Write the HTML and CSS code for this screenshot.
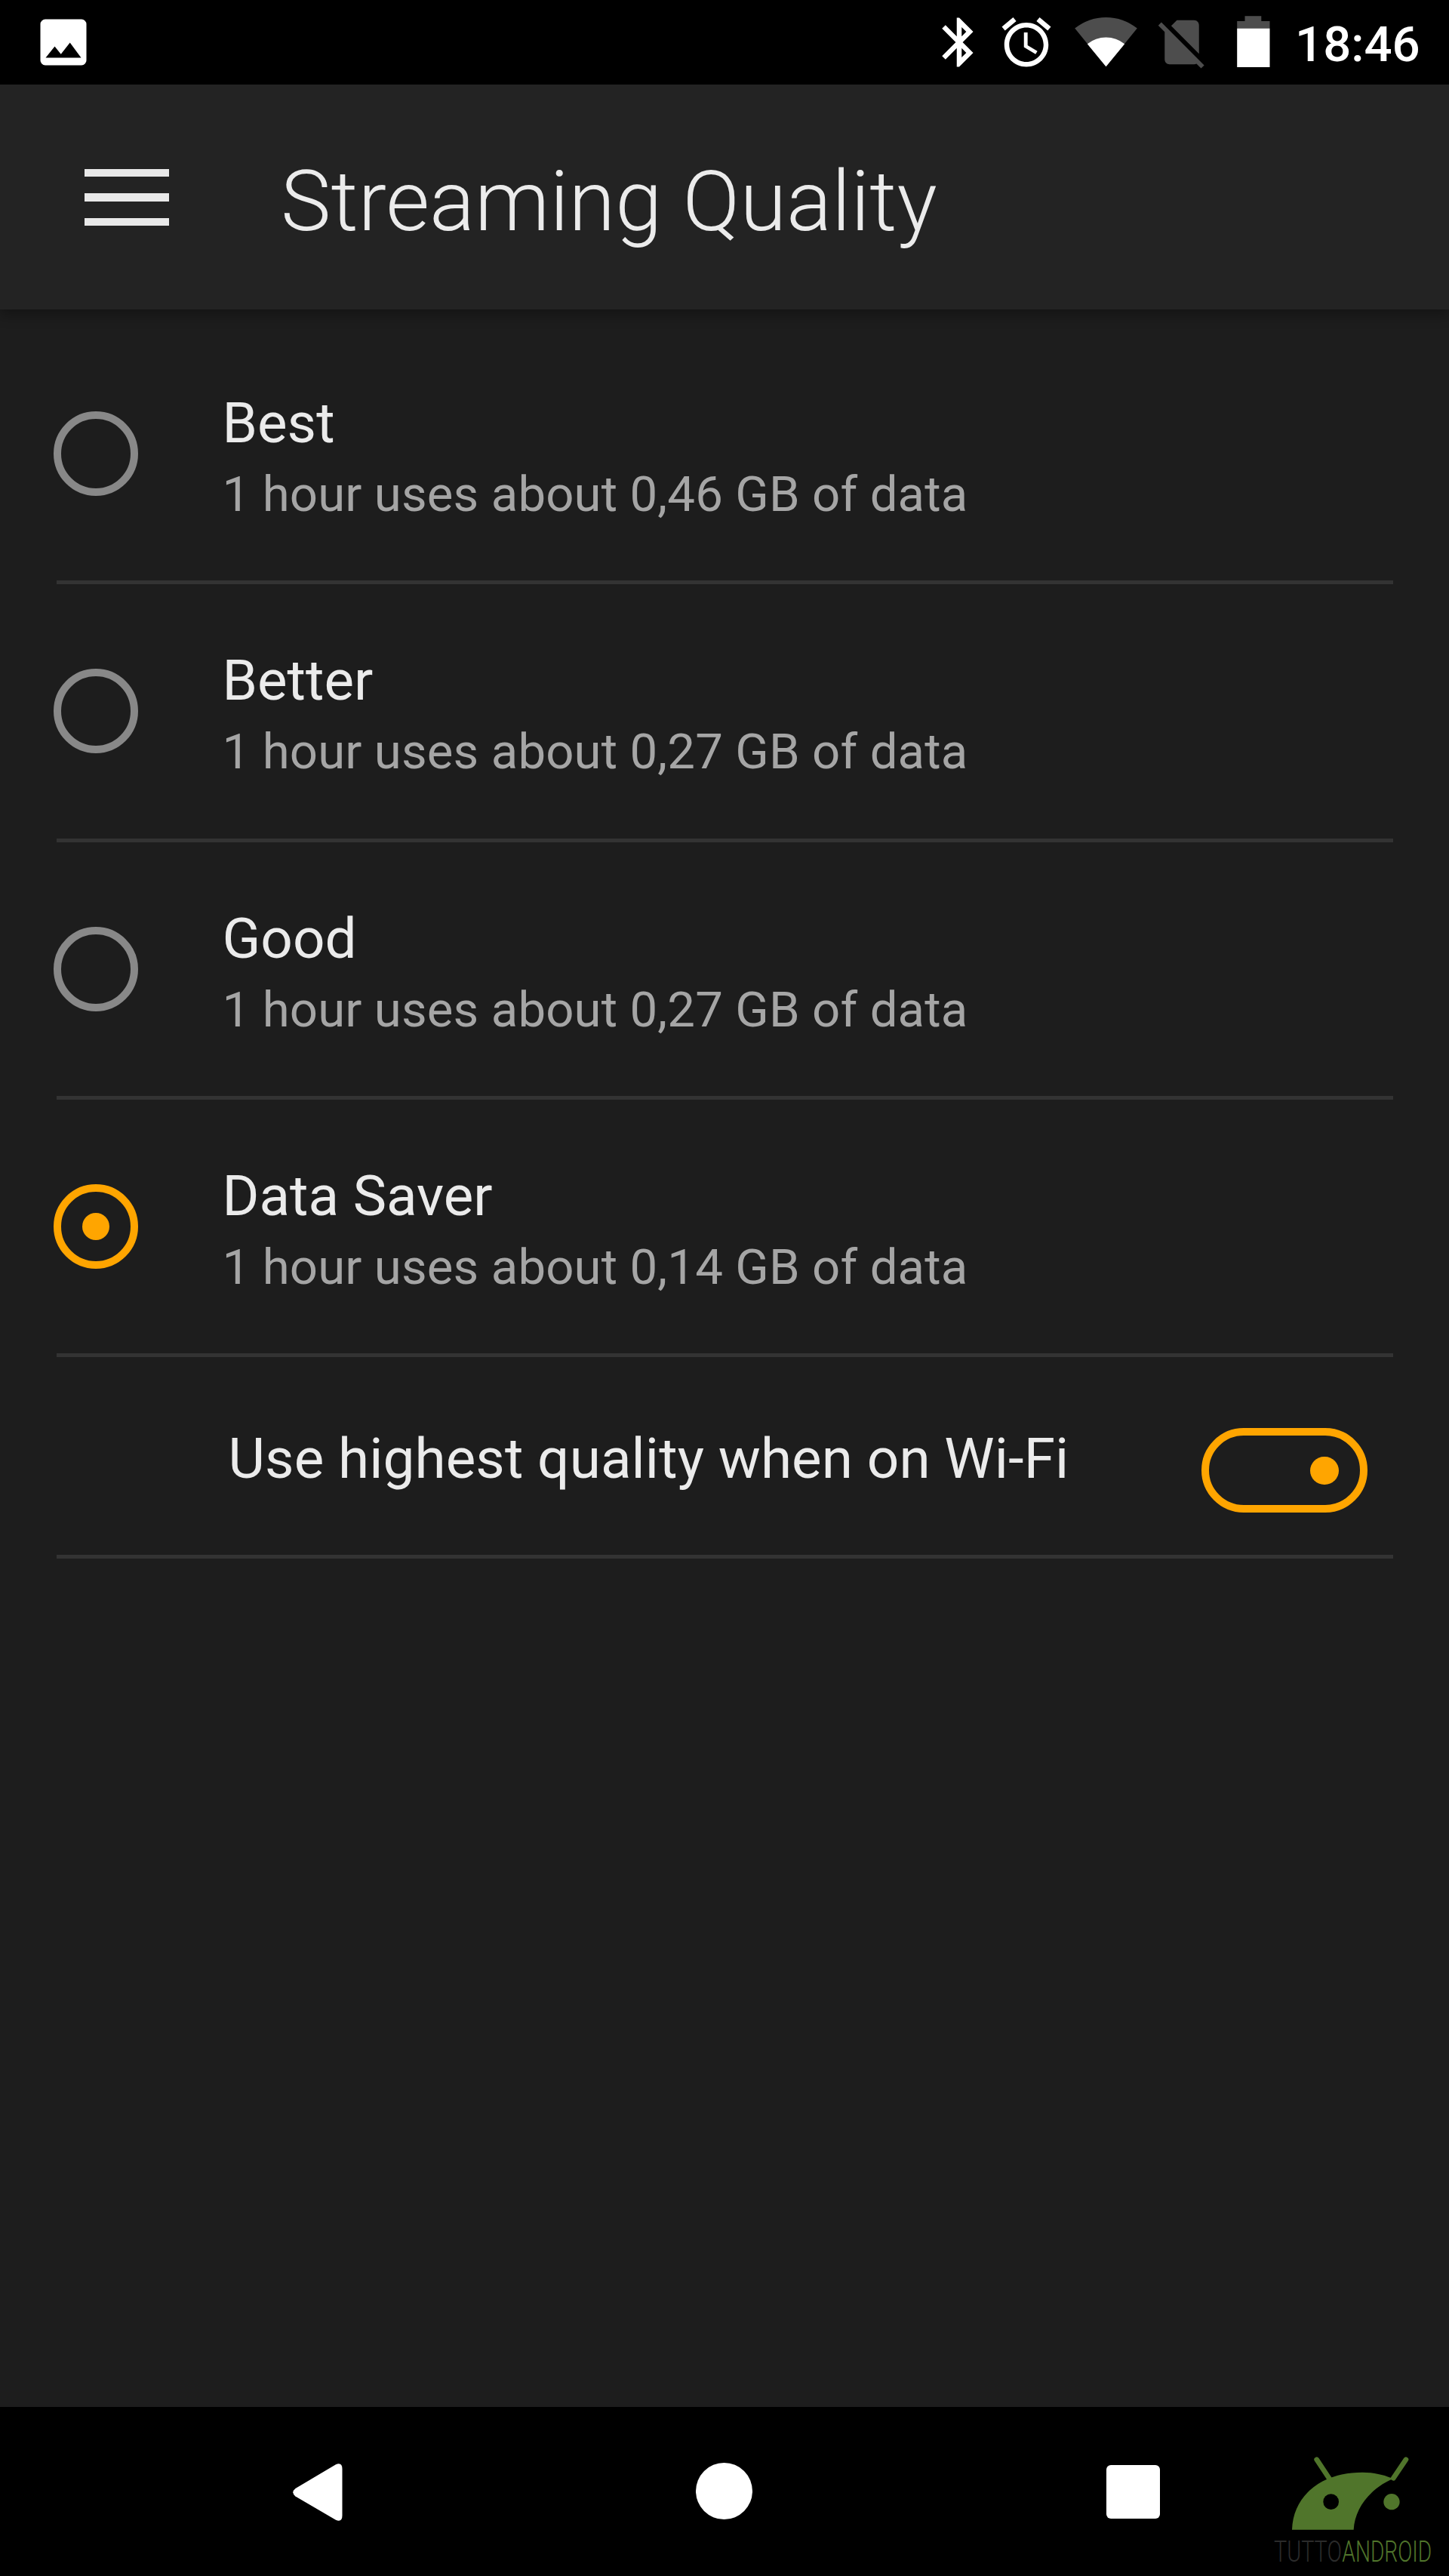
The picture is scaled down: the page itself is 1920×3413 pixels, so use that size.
FILE: index.html
```html
<!DOCTYPE html>
<html lang="en">
<head>
<meta charset="utf-8">
<title>Streaming Quality</title>
<link rel="stylesheet" href="styles.css">
</head>
<body>
<div class="screen">
  <div class="status-bar">
    <svg class="icon-picture" viewBox="0 0 62 62"><path fill="#fff" fill-rule="evenodd" d="M7 .5H55A6.5 6.5 0 0 1 61.500 7V55A6.500 6.500 0 0 1 55 61.500H7A6.500 6.500 0 0 1 .5 55V7A6.500 6.500 0 0 1 7 .5ZM7.500 51.500H54.500L39.700 31.500L27.700 46.700L19.500 36.500Z"/></svg>
    <div class="status-icons">
      <svg class="icon icon-bluetooth" viewBox="0 0 24 24"><path d="M17.710 7.710L12 2h-1v7.590L6.410 5 5 6.410 10.590 12 5 17.590 6.410 19 11 14.410V22h1l5.710-5.710-4.300-4.290 4.300-4.290zM13 5.830l1.880 1.880L13 9.590V5.830zm1.880 10.460L13 18.170v-3.760l1.880 1.880z"/></svg>
      <svg class="icon icon-alarm" viewBox="0 0 24 24"><path d="M22 5.720l-4.600-3.860-1.290 1.530 4.600 3.860L22 5.720zM7.880 3.390L6.600 1.860 2 5.710l1.290 1.530 4.590-3.850zM12.500 8H11v6l4.750 2.850.75-1.230-4-2.370V8zM12 4c-4.970 0-9 4.030-9 9s4.020 9 9 9c4.970 0 9-4.030 9-9s-4.030-9-9-9zm0 16c-3.870 0-7-3.130-7-7s3.130-7 7-7 7 3.130 7 7-3.130 7-7 7z"/></svg>
      <svg class="icon-wifi" viewBox="0 0 83 67"><path fill="#4d4d4d" d="M41.500 66.300L.2 15.600A65.500 65.500 0 0 1 82.800 15.600Z"/><path fill="#fff" d="M41.500 66.300L16.800 36.300A39.500 39.500 0 0 1 66.200 36.300Z"/></svg>
      <svg class="icon icon-sim" viewBox="0 0 24 24"><path d="M18.990 5c0-1.100-.89-2-1.990-2h-7L7.660 5.340 19 16.680 18.990 5zM3.650 3.880L2.380 5.150 5 7.770V19c0 1.100.9 2 2 2h10.010c.35 0 .67-.1.960-.26l1.880 1.880 1.270-1.270L3.650 3.880z"/></svg>
      <svg class="icon-battery" viewBox="0 0 44 68"><path fill="#4d4d4d" d="M10.500 .3H32.300V7H43.500V17H.2V7H10.500Z"/><path fill="#fff" d="M.2 16.700H43.500V68H.2Z"/></svg>
      <span class="clock">18:46</span>
    </div>
  </div>
  <header class="app-bar">
    <div class="menu"><span></span><span></span><span></span></div>
    <h1 class="app-title">Streaming Quality</h1>
  </header>
  <main class="settings">
    <div class="option"><span class="radio"></span><div class="labels"><div class="name">Best</div><div class="detail">1 hour uses about 0,46 GB of data</div></div></div>
    <div class="option"><span class="radio"></span><div class="labels"><div class="name">Better</div><div class="detail">1 hour uses about 0,27 GB of data</div></div></div>
    <div class="option"><span class="radio"></span><div class="labels"><div class="name">Good</div><div class="detail">1 hour uses about 0,27 GB of data</div></div></div>
    <div class="option"><span class="radio radio-on"></span><div class="labels"><div class="name">Data Saver</div><div class="detail">1 hour uses about 0,14 GB of data</div></div></div>
    <div class="wifi-row"><div class="name">Use highest quality when on Wi-Fi</div><span class="switch"></span></div>
  </main>
  <nav class="nav-bar">
    <svg class="nav-back" viewBox="0 0 66 76"><path fill="#fff" d="M3.500 33L57 1.200Q65.500-2 65.500 7V69Q65.500 78 57 74.800L3.500 43.500Q-3 38.200 3.500 33Z"/></svg>
    <span class="nav-home"></span>
    <span class="nav-recent"></span>
    <svg class="watermark" viewBox="0 0 640 470">
      <g stroke="#50752b" stroke-width="20" stroke-linecap="round"><path d="M173 14L230 100"/><path d="M528 14L478 88"/></g>
      <path fill="#50752b" d="M75 293C80 150 200 65 355 65C400 65 440 75 466 86L492 84C395 120 325 200 320 293Z"/>
      <circle cx="230" cy="182" r="31" fill="#000"/><circle cx="471" cy="182" r="32" fill="#50752b"/>
      <text class="mark-text mark-dark" x="3" y="421" textLength="270" lengthAdjust="spacingAndGlyphs">TUTTO</text>
      <text class="mark-text mark-green" x="274" y="421" textLength="357" lengthAdjust="spacingAndGlyphs">ANDROID</text>
    </svg>
  </nav>
</div>
</body>
</html>
```
FILE: styles.css
```css
* { box-sizing: border-box; }
body { margin: 0; background: #1d1d1d; font-family: Roboto, sans-serif; color: #ebebeb; }
.screen { width: 1920px; height: 3413px; display: flex; flex-direction: column; overflow: hidden; }
svg { display: block; flex: none; }

.status-bar { height: 112px; flex: none; background: #000; display: flex; justify-content: space-between; padding-left: 53px; }
.icon-picture { width: 62px; height: 62px; margin-top: 25px; }
.status-icons { display: flex; align-items: flex-start; width: 687px; }
.icon { width: 78px; height: 78px; margin-top: 17px; fill: #fff; }
.icon-bluetooth { margin-left: -1px; }
.icon-alarm { margin-left: 11px; }
.icon-wifi { width: 83px; height: 67px; margin: 22px 0 0 25px; }
.icon-sim { margin-left: 20px; fill: #4d4d4d; }
.icon-battery { width: 44px; height: 68px; margin: 21px 0 0 34px; }
.clock { margin: 21px 0 0 33px; font-size: 65.33px; line-height: 76px; font-weight: 500; color: #fff; }

.app-bar { position: relative; z-index: 1; height: 298px; flex: none; background: #232323; display: flex; padding-left: 111.500px; box-shadow: 0 8px 16px rgba(0, 0, 0, .3); }
.menu { width: 112.500px; margin-top: 111.500px; display: flex; flex-direction: column; gap: 22.500px; }
.menu span { height: 10.300px; background: #e8e8e8; }
.app-title { margin: 89px 0 0 148px; font-size: 112px; line-height: 132px; font-weight: 300; white-space: nowrap; }

.settings { flex: 1; padding: 23px 74.500px 0; }
.option { height: 341.333px; display: flex; border-bottom: 5.500px solid #333; }
.radio { width: 112px; height: 112px; margin: 112px 0 0 -4px; border: 10px solid #888; border-radius: 50%; flex: none; display: flex; align-items: center; justify-content: center; }
.radio-on { border-color: #ffa500; }
.radio-on::after { content: ""; width: 36px; height: 36px; border-radius: 50%; background: #ffa500; }
.labels { margin: 84px 0 0 112px; white-space: nowrap; }
.name { font-size: 74.670px; line-height: 88px; }
.detail { margin-top: 12px; font-size: 65.330px; line-height: 76px; letter-spacing: .12px; color: #a5a5a5; }
.wifi-row { height: 266.700px; display: flex; justify-content: space-between; border-bottom: 5.500px solid #333; padding: 0 34px 0 228px; white-space: nowrap; }
.wifi-row .name { margin-top: 91px; letter-spacing: .1px; }
.switch { width: 220px; height: 112px; margin-top: 94px; border: 10px solid #ffa500; border-radius: 56px; display: flex; align-items: center; justify-content: flex-end; padding-right: 28px; }
.switch::after { content: ""; width: 37.500px; height: 37.500px; border-radius: 50%; background: #ffa500; }

.nav-bar { position: relative; height: 224px; flex: none; background: #000; display: flex; align-items: flex-start; padding-left: 388px; }
.nav-back { width: 66px; height: 76px; margin-top: 75px; }
.nav-home { width: 75px; height: 75px; margin: 74px 0 0 468px; border-radius: 50%; background: #fff; }
.nav-recent { width: 71px; height: 71px; margin: 77px 0 0 469px; border-radius: 6px; background: #fff; }
.watermark { position: absolute; left: 1686.700px; top: 64.500px; width: 213.300px; height: 156.700px; }
.mark-text { font-size: 118px; font-weight: 300; }
.mark-dark { fill: #2b2b2b; }
.mark-green { fill: #50752b; }
```
